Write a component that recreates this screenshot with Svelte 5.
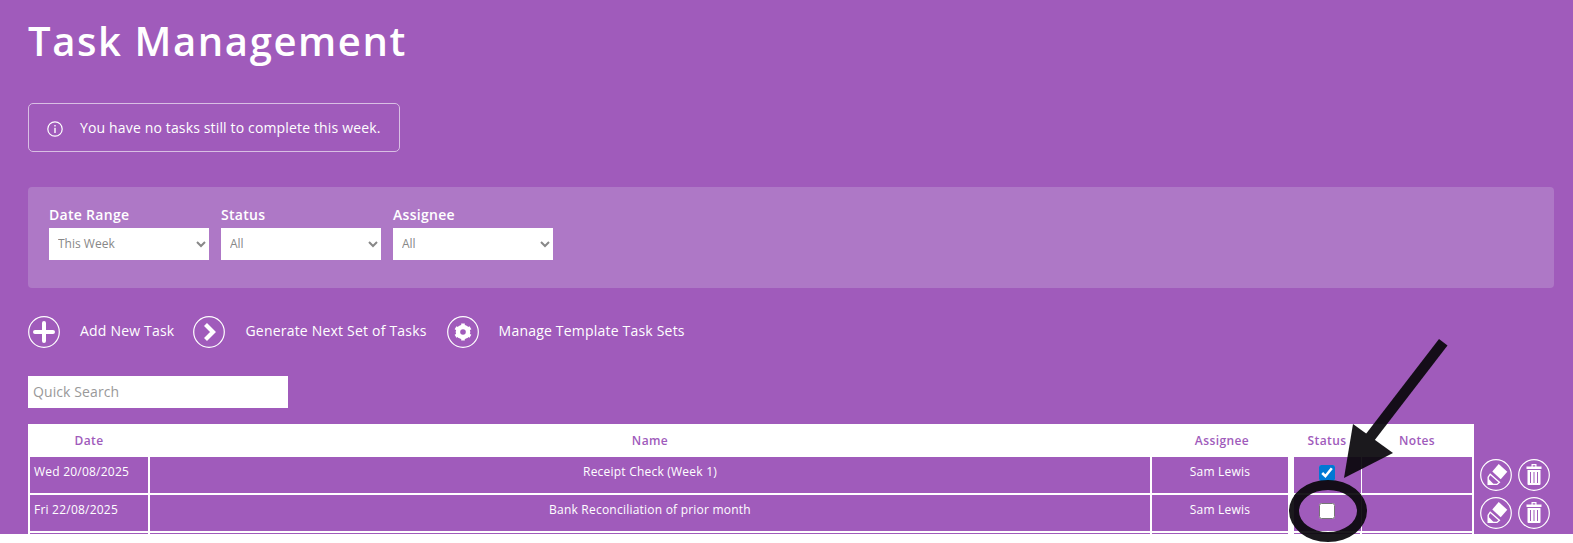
<script lang="ts">
	const tasks = [
		{ date: 'Wed 20/08/2025', name: 'Receipt Check (Week 1)', assignee: 'Sam Lewis', done: true },
		{ date: 'Fri 22/08/2025', name: 'Bank Reconciliation of prior month', assignee: 'Sam Lewis', done: false }
	];

	let search = $state('');
</script>

<div class="shot">
	<div class="page">
		<h1>Task Management</h1>

		<div class="notice">
			<svg class="info" viewBox="0 0 16 16" width="16" height="16" aria-hidden="true">
				<circle cx="8" cy="8" r="7.2" fill="none" stroke="#fff" stroke-width="1.2" />
				<rect x="7.3" y="6.8" width="1.4" height="5.2" fill="#fff" />
				<rect x="7.3" y="4" width="1.4" height="1.5" fill="#fff" />
			</svg>
			<span>You have no tasks still to complete this week.</span>
		</div>

		<section class="filters">
			<label class="filter">
				<span>Date Range</span>
				<select><option>This Week</option></select>
			</label>
			<label class="filter">
				<span>Status</span>
				<select><option>All</option></select>
			</label>
			<label class="filter">
				<span>Assignee</span>
				<select><option>All</option></select>
			</label>
		</section>

		<div class="actions">
			<button type="button" class="action">
				<svg class="round" viewBox="0 0 32 32" aria-hidden="true">
					<circle cx="16" cy="16" r="15.3" fill="none" stroke="#fff" stroke-width="1.2" />
					<path d="M16 7v18M7 16h18" stroke="#fff" stroke-width="4" stroke-linecap="round" />
				</svg>
				<span>Add New Task</span>
			</button>
			<button type="button" class="action">
				<svg class="round" viewBox="0 0 32 32" aria-hidden="true">
					<circle cx="16" cy="16" r="15.3" fill="none" stroke="#fff" stroke-width="1.2" />
					<path d="M12.5 8.5l7.5 7.5-7.5 7.5" fill="none" stroke="#fff" stroke-width="4.2" />
				</svg>
				<span>Generate Next Set of Tasks</span>
			</button>
			<button type="button" class="action">
				<svg class="round" viewBox="0 0 32 32" aria-hidden="true">
					<circle cx="16" cy="16" r="15.3" fill="none" stroke="#fff" stroke-width="1.2" />
					<circle cx="16" cy="16" r="7.3" fill="#fff" />
					<path
						d="M16 7.4v17.2M8.55 11.7l14.9 8.6M8.55 20.3l14.9-8.6"
						stroke="#fff"
						stroke-width="3.6"
					/>
					<circle cx="16" cy="16" r="2.8" fill="#a05bbb" />
				</svg>
				<span>Manage Template Task Sets</span>
			</button>
		</div>

		<input class="search" type="text" placeholder="Quick Search" bind:value={search} />

		<table>
			<colgroup>
				<col class="c-date" />
				<col class="c-name" />
				<col class="c-assignee" />
				<col class="c-status" />
				<col class="c-notes" />
				<col class="c-tools" />
			</colgroup>
			<thead>
				<tr>
					<th>Date</th>
					<th>Name</th>
					<th>Assignee</th>
					<th>Status</th>
					<th>Notes</th>
					<th class="tools-head"></th>
				</tr>
			</thead>
			<tbody>
				{#each tasks as t}
					<tr>
						<td class="date">{t.date}</td>
						<td>{t.name}</td>
						<td>{t.assignee}</td>
						<td class="status"><input type="checkbox" checked={t.done} /></td>
						<td></td>
						<td class="tools">
							<div class="tool-row">
								<svg class="round" viewBox="0 0 32 32" aria-hidden="true">
									<circle cx="16" cy="16" r="15.3" fill="none" stroke="#fff" stroke-width="1.2" />
									<path d="M18.7 5l8.6 7.8-6.6 7.4-8.4-7.6z" fill="#fff" />
									<path d="M10.2 15.2l9.2 8-2.4 2.2H8.2v-7.2z" fill="none" stroke="#fff" stroke-width="1.4" />
									<path d="M8.2 19.6l5.8 5.8H8.2z" fill="#fff" />
								</svg>
								<svg class="round" viewBox="0 0 32 32" aria-hidden="true">
									<circle cx="16" cy="16" r="15.3" fill="none" stroke="#fff" stroke-width="1.2" />
									<path d="M13.5 7.5V5h5v2.5H23.5V10h-15V7.5zM14.7 7.5h2.6V6.2h-2.6z" fill="#fff" fill-rule="evenodd" />
									<path
										d="M9.5 11h13v14a1 1 0 0 1-1 1h-11a1 1 0 0 1-1-1zM12 13v11h1v-11zM15.5 13v11h1v-11zM19 13v11h1v-11z"
										fill="#fff"
										fill-rule="evenodd"
									/>
								</svg>
							</div>
						</td>
					</tr>
				{/each}
				<tr class="cut"><td></td><td></td><td></td><td></td><td></td><td class="tools"></td></tr>
			</tbody>
		</table>
	</div>

	<svg class="markup" viewBox="0 0 1573 543" aria-hidden="true">
		<g opacity="0.93" fill="#0a080c" stroke="none">
			<path d="M1439 339 L1447.5 345.5 L1374 441 L1365.5 434.5 Z" />
			<path d="M1344 478 L1353 424 L1393 453 Z" />
			<path
				fill-rule="evenodd"
				d="M1289 511 a39 31 0 1 0 78 0 a39 31 0 1 0 -78 0 Z M1299 511 a29 21 0 1 1 58 0 a29 21 0 1 1 -58 0 Z"
			/>
		</g>
	</svg>
</div>

<style>
	:global(body) {
		background: #fff;
	}

	.shot {
		position: relative;
		height: 543px;
		overflow: hidden;
	}

	.page {
		box-sizing: border-box;
		height: 534px;
		padding: 14px 19px 0 28px;
		overflow: hidden;
		background: #a05bbb;
		color: #fff;
		font-family: 'Open Sans', sans-serif;
	}

	h1 {
		margin: 0;
		font-size: 40px;
		line-height: 54px;
		font-weight: 600;
		letter-spacing: 1.6px;
	}

	.notice {
		display: flex;
		align-items: center;
		gap: 17px;
		box-sizing: border-box;
		width: 372px;
		height: 49px;
		margin-top: 35px;
		padding-left: 18px;
		border: 1px solid #d9bfe4;
		border-radius: 5px;
		font-size: 14px;
		letter-spacing: 0.15px;
	}

	.info {
		margin-top: 2px;
	}

	.filters {
		display: flex;
		gap: 12px;
		box-sizing: border-box;
		height: 101px;
		margin-top: 35px;
		padding: 17px 21px;
		background: #ae78c6;
		border-radius: 4px;
	}

	.filter {
		display: flex;
		flex-direction: column;
		width: 160px;
		font-size: 14px;
		font-weight: 600;
		line-height: 22px;
		letter-spacing: 0.3px;
	}

	.filter span {
		margin-bottom: 2px;
	}

	select {
		height: 32px;
		border: 0;
		border-radius: 0;
		padding: 0 5px 2px;
		background: #fff;
		color: #888;
		font: 400 12px 'Open Sans', sans-serif;
	}

	.actions {
		display: flex;
		gap: 20px;
		margin-top: 28px;
	}

	.action {
		display: flex;
		align-items: center;
		gap: 20px;
		padding: 0;
		border: 0;
		background: none;
		color: #fff;
		font: 400 14px 'Open Sans', sans-serif;
		letter-spacing: 0.2px;
	}

	.action:nth-child(2) {
		margin-left: -1px;
	}

	.action span {
		padding-bottom: 4px;
	}

	.round {
		display: block;
		flex: none;
		width: 32px;
		height: 32px;
	}

	.search {
		display: block;
		box-sizing: border-box;
		width: 260px;
		height: 32px;
		margin-top: 28px;
		padding: 0 5px 2px;
		border: 0;
		border-radius: 0;
		background: #fff;
		font: 400 14px 'Open Sans', sans-serif;
		letter-spacing: 0.1px;
	}

	.search::placeholder {
		color: #999;
	}

	table {
		width: 1526px;
		margin-top: 16px;
		table-layout: fixed;
		border-collapse: separate;
		border-spacing: 0;
	}

	.c-date { width: 122px; }
	.c-name { width: 1002px; }
	.c-assignee { width: 142px; }
	.c-status { width: 68px; }
	.c-notes { width: 112px; }
	.c-tools { width: 80px; }

	th {
		height: 33px;
		padding: 0 2px 0 0;
		background: #fff;
		color: #a05bbb;
		font-size: 12px;
		font-weight: 600;
		letter-spacing: 0.4px;
		text-align: center;
	}

	th:first-child {
		padding: 0;
	}

	th.tools-head {
		background: none;
	}

	td {
		box-sizing: border-box;
		height: 38px;
		padding: 7px 0 0;
		border-right: 2px solid #fff;
		border-bottom: 2px solid #fff;
		font-size: 12px;
		line-height: 16px;
		letter-spacing: 0.22px;
		text-align: center;
		vertical-align: top;
	}

	td:first-child {
		border-left: 2px solid #fff;
	}

	td.date {
		padding-left: 4px;
		text-align: left;
	}

	td:nth-child(3) {
		border-right-width: 6px;
	}

	td.status {
		padding: 8px 1px 0 0;
		border-right-width: 1px;
	}

	input[type='checkbox'] {
		display: block;
		width: 16px;
		height: 16px;
		margin: 0 auto;
		accent-color: #0078d4;
	}

	td.tools {
		padding: 2px 0 0 6px;
		border: 0;
	}

	.tool-row {
		display: flex;
		gap: 6px;
	}

	.markup {
		position: absolute;
		left: 0;
		top: 0;
		width: 1573px;
		height: 543px;
		pointer-events: none;
	}
</style>
